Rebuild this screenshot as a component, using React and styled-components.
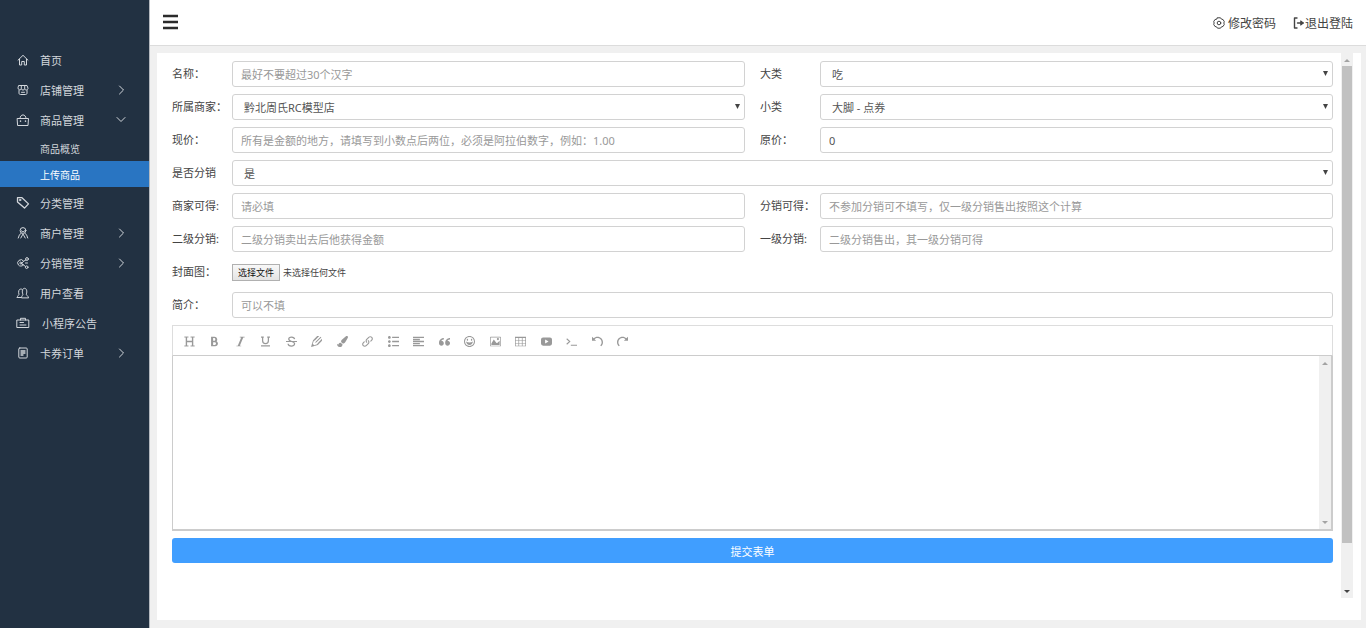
import React from "react";
import styled, { createGlobalStyle } from "styled-components";
import { FaPaintBrush } from "react-icons/fa";
import {
  ImBold, ImItalic, ImPencil2, ImLink, ImList2,
  ImParagraphLeft, ImQuotesLeft, ImHappy, ImImage, ImTable2, ImUndo, ImRedo,
} from "react-icons/im";

const GlobalStyle = createGlobalStyle`
  *, *::before, *::after { box-sizing: border-box; }
  body {
    margin: 0;
    font-family: "Noto Sans", "Noto Sans CJK SC", sans-serif;
    font-size: 11px;
    color: #444;
    background: #f0f0f0;
  }
  button, input, select, textarea { font: inherit; color: inherit; }
`;

const Page = styled.div`
  display: flex;
  height: 100vh;
`;

const Sidebar = styled.nav`
  flex: 0 0 150px;
  padding-top: 45px;
  background: #223142;
  border-right: 1px solid #b4b9bf;
`;

const MenuList = styled.ul`
  list-style: none;
  margin: 0;
  padding: 0;
`;

const SubList = styled(MenuList)`
  padding-bottom: 1px;
`;

const MenuLink = styled.a`
  display: flex;
  align-items: center;
  gap: 10px;
  height: 30px;
  padding: 0 21px 0 16px;
  color: #d3d7dc;
  text-decoration: none;
`;

const MenuText = styled.span`
  flex: 1;
  padding-left: ${(p) => (p.$indent ? "2px" : "0")};
`;

const SubLink = styled.a`
  display: flex;
  align-items: center;
  height: 26px;
  padding-left: 40px;
  font-size: 10px;
  color: ${(p) => (p.$active ? "#fff" : "#d3d7dc")};
  background: ${(p) => (p.$active ? "#2975c2" : "transparent")};
  text-decoration: none;
`;

const LineIcon = styled.svg`
  flex: none;
  width: ${(p) => p.$size || 14}px;
  height: ${(p) => p.$size || 14}px;
  fill: none;
  stroke: currentColor;
  stroke-width: ${(p) => p.$weight || 1};
  stroke-linecap: round;
  stroke-linejoin: round;
`;

const Main = styled.div`
  flex: 1;
  min-width: 0;
  display: flex;
  flex-direction: column;
`;

const Header = styled.header`
  display: flex;
  align-items: center;
  justify-content: space-between;
  height: 46px;
  padding: 0 13px 0 13px;
  background: #fff;
  border-bottom: 1px solid #dcdcdc;
`;

const MenuButton = styled.button`
  display: flex;
  padding: 0 0 2px;
  border: 0;
  background: none;
  color: #2b2b2b;
`;

const HeaderLinks = styled.div`
  display: flex;
  gap: 17px;
`;

const HeaderLink = styled.a`
  display: flex;
  align-items: center;
  gap: ${(p) => p.$gap}px;
  font-size: 12px;
  color: #444;
  text-decoration: none;
`;

const Panel = styled.main`
  flex: 1;
  min-height: 0;
  display: flex;
  margin: 7px 5px 8px 7px;
  padding: 0 8px 22px 15px;
  background: #fff;
`;

const Form = styled.form`
  flex: 1;
  min-width: 0;
  margin-right: 8px;
  padding-top: 8px;
`;

const Fields = styled.div`
  display: grid;
  grid-template-columns: 1fr 1fr;
  gap: 7px 15px;
`;

const Field = styled.div`
  display: flex;
  align-items: center;
  min-width: 0;
  height: 26px;
  grid-column: ${(p) => (p.$wide ? "1 / -1" : "auto")};
`;

const Label = styled.label`
  flex: 0 0 60px;
  padding-bottom: 2px;
  white-space: nowrap;
`;

const TextInput = styled.input`
  flex: 1;
  min-width: 0;
  height: 26px;
  padding: 0 8px;
  border: 1px solid #d2d2d2;
  border-radius: 3px;
  background: #fff;
  color: #555;
  outline: none;
  &::placeholder { color: #999; opacity: 1; }
`;

const SelectBox = styled.div`
  position: relative;
  flex: 1;
  min-width: 0;
`;

const Select = styled.select`
  display: block;
  width: 100%;
  height: 26px;
  padding: 0 20px 0 11px;
  border: 1px solid #d2d2d2;
  border-radius: 3px;
  background: #fff;
  color: #555;
  appearance: none;
  outline: none;
`;

const SelectArrow = styled.svg`
  position: absolute;
  right: 5px;
  top: 10px;
  width: 5px;
  height: 5px;
  fill: #444;
  pointer-events: none;
`;

const FileInput = styled.input`
  position: absolute;
  width: 1px;
  height: 1px;
  opacity: 0;
`;

const FileButton = styled.label`
  display: flex;
  align-items: center;
  height: 17px;
  padding: 0 5px;
  border: 1px solid #b0b0b0;
  background: linear-gradient(#f8f8f8, #e4e4e4);
  font-size: 9px;
  color: #111;
`;

const FileName = styled.span`
  margin-left: 3px;
  font-size: 9px;
`;

const Editor = styled.div`
  margin: 7px 0;
`;

const Toolbar = styled.div`
  height: 31px;
  padding: 2px 8px 0;
  display: flex;
  align-items: center;
  border: 1px solid #ddd;
  border-bottom-color: #ccc;
`;

const Tools = styled.div`
  flex: 0 1 450px;
  display: flex;
  justify-content: space-between;
`;

const Tool = styled.button`
  display: flex;
  align-items: center;
  justify-content: center;
  width: 16px;
  height: 16px;
  padding: 0;
  border: 0;
  background: none;
  color: #999;
  svg { width: 11px; height: 11px; }
`;

const EditorBody = styled.div`
  display: flex;
  height: 175px;
  border: solid #ccc;
  border-width: 0 2px 2px 1px;
`;

const EditorText = styled.textarea`
  flex: 1;
  min-width: 0;
  padding: 8px;
  border: 0;
  outline: none;
  resize: none;
  background: #fff;
`;

const Submit = styled.button`
  display: block;
  width: 100%;
  height: 25px;
  padding: 0;
  border: 0;
  border-radius: 3px;
  background: #409eff;
  color: #fff;
`;

const ScrollTrack = styled.div`
  flex: 0 0 12px;
  display: flex;
  flex-direction: column;
  align-items: center;
  justify-content: space-between;
  background: #f0f0f0;
`;

const ScrollArrow = styled.svg`
  flex: none;
  width: 12px;
  height: 13px;
  fill: ${(p) => (p.$dark ? "#444" : "#a3a3a3")};
`;

const ScrollRail = styled.div`
  flex: 1;
  width: 10px;
`;

const ScrollThumb = styled.div`
  height: 92%;
  background: #c1c1c1;
`;

function Scrollbar({ thumb }) {
  return (
    <ScrollTrack aria-hidden="true">
      <ScrollArrow viewBox="0 0 12 13"><path d="M3 9h6L6 6z" /></ScrollArrow>
      {thumb && <ScrollRail><ScrollThumb /></ScrollRail>}
      <ScrollArrow $dark={thumb} viewBox="0 0 12 13"><path d="M3 5h6L6 8z" /></ScrollArrow>
    </ScrollTrack>
  );
}

const icons = {
  home: <path d="M2 7.2 7 2.3l5 4.9M3.500 6.200V12h2.200V8.500h2.600V12h2.200V6.200" />,
  shop: <path d="M3 2.500h8l1 2.700c0 2.200-2.900 2.200-3.300.6-.3 1.700-3.100 1.700-3.400 0C4.900 7.400 2 7.400 2 5.200zM3 7.500V10c0 1 .5 1.500 1.500 1.500h5c1 0 1.500-.5 1.500-1.500V7.500M5.300 2.500v3M8.700 2.500v3M5.500 9.300h3" />,
  bag: <><path d="M1.500 5.500h11l-.5 7H2zM4 5.500C4 .6 10 .6 10 5.500" /><path strokeWidth="1.500" d="M4.500 8v.2M9.500 8v.2" /></>,
  tag: <><path strokeWidth="1.300" d="M1.500 1.700H6l6.500 6.200-4 4.200L1.500 6z" /><circle cx="4" cy="4" r=".8" /></>,
  merchant: <><circle cx="7" cy="4.500" r="2.900" /><path d="M5 7.200Q3 8.500 2.200 12M9 7.200q2 1.300 2.800 4.800M4.800 12 7 8l2.200 4M5.300 4.800 7 6l1.700-1.200" /></>,
  share: <><path d="M7.200 9.200A3.200 3.200 0 1 1 7.600 5.200L5.500 7.500z" /><circle cx="4.700" cy="7" r=".9" /><circle cx="11" cy="3" r="1.400" /><circle cx="10.700" cy="11.200" r="1.300" /><path d="M7.600 5.200 9.900 4M6.500 8l3 2.600M9.500 7h2" /></>,
  users: <path d="M1.200 11.500C1.400 9.600 2.700 9.500 3 8.300 2 5.500 3 3 4.800 3c.8 0 1.300.3 1.700.9M1.200 11.500h3.600M5.500 11.500c.1-1.800 1.300-2 1.400-3.200C5.600 5.200 6.500 2.300 8.500 2.300s3 2.900 1.800 6c.2 1.300 1.800 1.400 2.200 3.200z" />,
  board: <path d="M1.200 4h11.600v7.500H1.200zM4.500 4V2.300h5V4M4 6.500h3.500M4 9h6" />,
  order: <><rect x="2.800" y="2" width="8.400" height="10" rx="1" /><path strokeWidth="1.300" d="M5 5h4M5 7h4M5 9h2" /></>,
  right: <path d="m5.500 3 4 4-4 4" />,
  down: <path d="m3 4.500 4 4 4-4" />,
};

function Icon({ name, size }) {
  return <LineIcon $size={size} viewBox="0 0 14 14" aria-hidden="true">{icons[name]}</LineIcon>;
}

const menu = [
  { icon: "home", text: "首页" },
  { icon: "shop", text: "店铺管理", arrow: "right" },
  { icon: "bag", text: "商品管理", arrow: "down", children: [{ text: "商品概览" }, { text: "上传商品", active: true }] },
  { icon: "tag", text: "分类管理" },
  { icon: "merchant", text: "商户管理", arrow: "right" },
  { icon: "share", text: "分销管理", arrow: "right" },
  { icon: "users", text: "用户查看" },
  { icon: "board", text: "小程序公告", indent: true },
  { icon: "order", text: "卡券订单", arrow: "right" },
];

const fields = [
  { id: "name", label: "名称：", placeholder: "最好不要超过30个汉字" },
  { id: "category", label: "大类", options: ["吃"] },
  { id: "merchant", label: "所属商家：", options: ["黔北周氏RC模型店"] },
  { id: "subcategory", label: "小类", options: ["大脚 - 点券"] },
  { id: "price", label: "现价：", placeholder: "所有是金额的地方，请填写到小数点后两位，必须是阿拉伯数字，例如：1.00" },
  { id: "original", label: "原价：", value: "0" },
  { id: "distribute", label: "是否分销", options: ["是"], wide: true },
  { id: "merchantGain", label: "商家可得:", placeholder: "请必填" },
  { id: "distributeGain", label: "分销可得：", placeholder: "不参加分销可不填写，仅一级分销售出按照这个计算" },
  { id: "levelTwo", label: "二级分销:", placeholder: "二级分销卖出去后他获得金额" },
  { id: "levelOne", label: "一级分销:", placeholder: "二级分销售出，其一级分销可得" },
  { id: "cover", label: "封面图：", file: true, wide: true },
  { id: "intro", label: "简介：", placeholder: "可以不填", wide: true },
];

const StrokeGlyph = ({ d, weight }) => (
  <svg viewBox="0 0 16 16" fill="none" stroke="currentColor" strokeWidth={weight}>
    <path d={d} />
  </svg>
);

const HeadingIcon = () => (
  <svg viewBox="0 0 16 16" fill="none" stroke="currentColor">
    <path strokeWidth="2" d="M3.500 1.500v13M12.500 1.500v13M3.500 8h9" />
    <path strokeWidth="1.400" d="M.5 1.500h6M9.500 1.500h6M.5 14.500h6M9.500 14.500h6" />
  </svg>
);

const UnderlineIcon = () => <StrokeGlyph weight={1.8} d="M1.500 1.500h4M10.500 1.500h4M3.800 1.500V7c0 5.500 8.400 5.500 8.400 0V1.500M1.500 14.500h13" />;

const StrikeIcon = () => <StrokeGlyph weight={1.8} d="M12.500 4.500C12 .5 4 .5 4 4.500 4 9 12.500 7 12.500 11.300c0 4.500-9 4.500-9.500 0M0 8h16" />;

const VideoIcon = () => (
  <svg viewBox="0 0 16 16" fill="currentColor">
    <path fillRule="evenodd" d="M3 2h10q3 0 3 3v6q0 3-3 3H3q-3 0-3-3V5q0-3 3-3zm3 3v6l5-3z" />
  </svg>
);

const TerminalIcon = () => <StrokeGlyph weight={1.5} d="m1 4 4.500 4L1 12M7 13.300h9" />;

const tools = [
  ["标题", HeadingIcon], ["加粗", ImBold], ["斜体", ImItalic], ["下划线", UnderlineIcon],
  ["删除线", StrikeIcon], ["文字颜色", ImPencil2], ["背景色", FaPaintBrush], ["链接", ImLink],
  ["列表", ImList2], ["对齐", ImParagraphLeft], ["引用", ImQuotesLeft], ["表情", ImHappy],
  ["图片", ImImage], ["表格", ImTable2], ["视频", VideoIcon], ["代码", TerminalIcon],
  ["撤销", ImUndo], ["重做", ImRedo],
];

function Control({ field }) {
  if (field.file) {
    return (
      <>
        <FileInput type="file" id={field.id} />
        <FileButton htmlFor={field.id}>选择文件</FileButton>
        <FileName>未选择任何文件</FileName>
      </>
    );
  }
  if (field.options) {
    return (
      <SelectBox>
        <Select id={field.id}>
          {field.options.map((o) => <option key={o}>{o}</option>)}
        </Select>
        <SelectArrow viewBox="0 0 5 5"><path d="M0 0h5L2.500 5z" /></SelectArrow>
      </SelectBox>
    );
  }
  return <TextInput id={field.id} type="text" placeholder={field.placeholder} defaultValue={field.value} />;
}

export default function App() {
  return (
    <>
      <GlobalStyle />
      <Page>
        <Sidebar>
          <MenuList>
            {menu.map((item) => (
              <li key={item.text}>
                <MenuLink href="#">
                  <Icon name={item.icon} />
                  <MenuText $indent={item.indent}>{item.text}</MenuText>
                  {item.arrow && <Icon name={item.arrow} />}
                </MenuLink>
                {item.children && (
                  <SubList>
                    {item.children.map((c) => (
                      <li key={c.text}><SubLink href="#" $active={c.active}>{c.text}</SubLink></li>
                    ))}
                  </SubList>
                )}
              </li>
            ))}
          </MenuList>
        </Sidebar>
        <Main>
          <Header>
            <MenuButton type="button" aria-label="菜单">
              <LineIcon $size={16} $weight={3} viewBox="0 0 16 16"><path strokeLinecap="butt" strokeWidth="2.500" d="M0 2h15M0 8h15M0 14h15" /></LineIcon>
            </MenuButton>
            <HeaderLinks>
              <HeaderLink href="#" $gap={3}>
                <LineIcon $size={12} viewBox="0 0 12 12">
                  <path d="M4.500.8h3l.9 1.300 1.700.5 1.200 2.100L10.800 6l.5 1.300-1.200 2.100-1.700.5-.9 1.300h-3l-.9-1.300-1.700-.5L.7 7.300 1.200 6 .7 4.700l1.200-2.100 1.700-.5z" />
                  <circle cx="6" cy="6" r="1.800" />
                </LineIcon>
                修改密码
              </HeaderLink>
              <HeaderLink href="#" $gap={0}>
                <LineIcon $size={12} viewBox="0 0 12 12">
                  <path strokeWidth="1.400" d="M4 1H1.500v10H4M4.500 6H10" />
                  <path fill="currentColor" d="M8 4l2.500 2L8 8z" />
                </LineIcon>
                退出登陆
              </HeaderLink>
            </HeaderLinks>
          </Header>
          <Panel>
            <Form onSubmit={(e) => e.preventDefault()}>
              <Fields>
                {fields.map((f) => (
                  <Field key={f.id} $wide={f.wide}>
                    <Label htmlFor={f.id}>{f.label}</Label>
                    <Control field={f} />
                  </Field>
                ))}
              </Fields>
              <Editor>
                <Toolbar>
                  <Tools>
                    {tools.map(([name, Glyph]) => (
                      <Tool key={name} type="button" aria-label={name}><Glyph /></Tool>
                    ))}
                  </Tools>
                </Toolbar>
                <EditorBody>
                  <EditorText aria-label="内容" />
                  <Scrollbar />
                </EditorBody>
              </Editor>
              <Submit type="submit">提交表单</Submit>
            </Form>
            <Scrollbar thumb />
          </Panel>
        </Main>
      </Page>
    </>
  );
}
